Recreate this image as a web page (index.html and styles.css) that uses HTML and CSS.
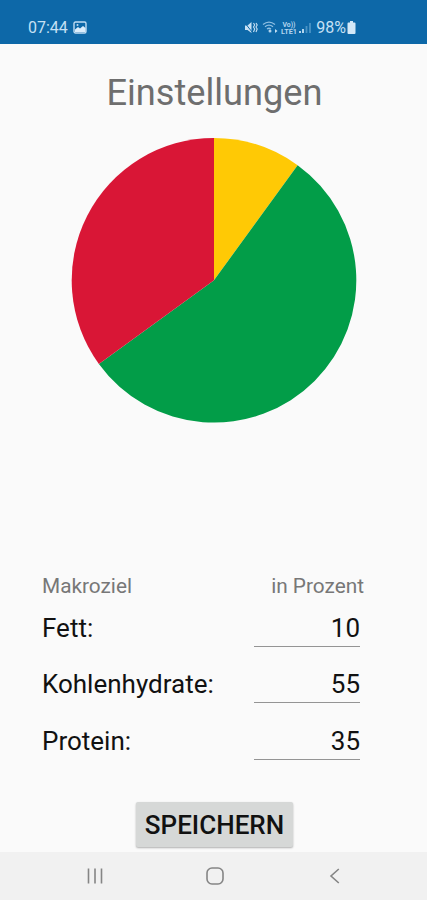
FILE: index.html
```
<!DOCTYPE html>
<html lang="de">

<head>
    <meta charset="UTF-8">
    <title>Einstellungen</title>
    <link rel="stylesheet" href="styles.css">
</head>

<body>
    <div class="status-bar">
        <span class="clock">07:44</span>
        <svg class="icon-picture" width="14" height="13" viewBox="0 0 14 13">
            <rect x="1" y="1" width="12" height="11" rx="1.5" fill="none" stroke="#c0dcf2" stroke-width="1.4"/>
            <path d="M2 11V8.5L5 6l2 1.5L10 5l2.500 2V11z" fill="#dcedfb"/>
            <circle cx="4.500" cy="4" r="1" fill="#c0dcf2"/>
        </svg>
        <svg class="icons-right" width="70" height="16" viewBox="0 0 70 16">
            <!-- mute -->
            <path d="M1 5.500h2.500L7.500 2v11L3.500 10H1z" fill="#c6e0f4"/>
            <path d="M.5 2.500L8.500 12.500" stroke="#0d68a8" stroke-width="1"/>
            <path d="M9.500 3l1.200 2-1.200 2 1.200 2-1.200 3M12 3l1.200 2L12 7l1.200 2L12 12" fill="none" stroke="#c6e0f4" stroke-width="1.100"/>
            <!-- wifi -->
            <path d="M19 4.500Q25 -.2 31 4.500M21 6.800Q25 3.500 29 6.800M23 9q2-1.500 4 0" fill="none" stroke="#8fbfe2" stroke-width="1.300"/>
            <circle cx="26" cy="11" r="1.500" fill="#b2d4ee"/>
            <path d="M31 9l2.500 2-2.500 2z" fill="#c6e0f4"/>
            <!-- volte -->
            <text class="volte" x="38.500" y="7" textLength="13" lengthAdjust="spacingAndGlyphs">Vo))</text>
            <text class="volte" x="37" y="13.500" textLength="16" lengthAdjust="spacingAndGlyphs">LTE1</text>
            <!-- signal -->
            <path d="M56 11v2M59 9v4" stroke="#c6e0f4" stroke-width="1.800"/>
            <path d="M62.500 6v7M66 3v10" stroke="#4a93c5" stroke-width="1.800"/>
        </svg>
        <span class="percent">98%</span>
        <svg class="icon-battery" width="9" height="13" viewBox="0 0 9 13">
            <path d="M3 0h3v1.500h1.500q1 0 1 1V12q0 1-1 1h-6q-1 0-1-1V2.500q0-1 1-1H3z" fill="#d3e8f8"/>
        </svg>
    </div>

    <div class="content">
        <h1>Einstellungen</h1>
        <svg class="pie" width="286" height="286" viewBox="-143 -143.300 286 286">
            <path d="M0 0V-142.300A142.300 142.300 0 0 1 83.640 -115.120z" fill="#ffc905"/>
            <path d="M0 0L83.640 -115.120A142.300 142.300 0 1 1 -115.120 83.640z" fill="#029d48"/>
            <path d="M0 0L-115.120 83.640A142.300 142.300 0 0 1 0 -142.300z" fill="#d91636"/>
        </svg>

        <div class="goals">
            <div class="goals-head">
                <span>Makroziel</span>
                <span>in Prozent</span>
            </div>
            <div class="goal">
                <label for="fett">Fett:</label>
                <input type="text" id="fett" value="10">
            </div>
            <div class="goal">
                <label for="kohlenhydrate">Kohlenhydrate:</label>
                <input type="text" id="kohlenhydrate" value="55">
            </div>
            <div class="goal">
                <label for="protein">Protein:</label>
                <input type="text" id="protein" value="35">
            </div>
        </div>

        <button class="save">SPEICHERN</button>
    </div>

    <div class="nav-bar">
        <svg width="18" height="18" viewBox="0 0 18 18">
            <path d="M2.500 1.500v15M9 1.500v15M15.500 1.500v15"/>
        </svg>
        <svg width="18" height="18" viewBox="0 0 18 18">
            <rect x="1" y="1" width="16" height="16" rx="5"/>
        </svg>
        <svg width="18" height="18" viewBox="0 0 18 18">
            <path d="M12.800 2L5 9l7.800 7"/>
        </svg>
    </div>
</body>

</html>
```

FILE: styles.css
```
* {
    box-sizing: border-box;
}

body {
    margin: 0;
    height: 900px;
    display: flex;
    flex-direction: column;
    background-color: #fafafa;
    font-family: Roboto, "Liberation Sans", sans-serif;
    color: #111;
    overflow: hidden;
}

.status-bar {
    height: 44px;
    padding: 11px 71px 0 28px;
    display: flex;
    align-items: center;
    background-color: #0d68a8;
    color: #c6e0f4;
    font-size: 16px;
}

.icon-picture {
    margin-left: 5px;
}

.icons-right {
    margin-left: auto;
}

.volte {
    font-size: 7px;
    font-weight: bold;
    fill: #b2d4ee;
}

.percent {
    margin-left: 2px;
    font-size: 16px;
}

.icon-battery {
    margin-left: 1px;
}

.content {
    height: 808px;
    display: flex;
    flex-direction: column;
    align-items: center;
}

h1 {
    margin: 26px 0 0 2px;
    font-size: 36.2px;
    line-height: 45px;
    font-weight: normal;
    color: #6e6e6e;
}

.pie {
    margin: 22px 0 0 1px;
    flex: none;
}

.goals {
    width: 427px;
    margin-top: 149px;
    padding: 0 63px 0 42px;
}

.goals-head {
    display: flex;
    justify-content: space-between;
    font-size: 20.8px;
    line-height: 28px;
    color: #777;
}

.goal {
    height: 56.3px;
    padding-right: 4px;
    display: flex;
    justify-content: space-between;
    align-items: flex-start;
    font-size: 26px;
}

.goal label {
    line-height: 57px;
}

.goal input {
    width: 106px;
    height: 47px;
    padding: 10px 0 0;
    border: none;
    border-bottom: 1px solid #949494;
    background-color: transparent;
    outline: none;
    font: inherit;
    color: inherit;
    text-align: right;
}

.save {
    width: 157px;
    height: 45px;
    margin: 33px 0 0 2px;
    padding: 2px 0 0;
    flex: none;
    border: none;
    border-radius: 2px;
    background-color: #d6d8d7;
    box-shadow: 0 1px 2px rgba(0, 0, 0, 0.3);
    font-family: inherit;
    font-size: 26px;
    font-weight: 500;
    color: #111;
}

.nav-bar {
    height: 48px;
    padding: 0 83px 0 86px;
    display: flex;
    justify-content: space-between;
    align-items: center;
    background-color: #f1f1f1;
}

.nav-bar svg {
    fill: none;
    stroke: #858585;
    stroke-width: 1.6;
}
```
